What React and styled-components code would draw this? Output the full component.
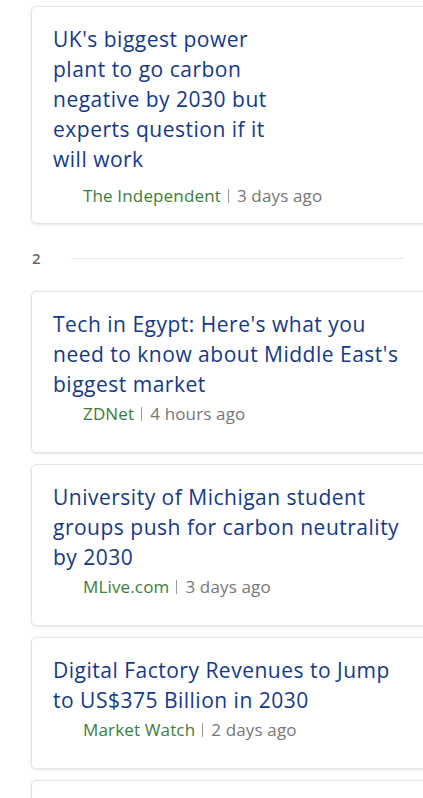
import React from "react";
import styled, { createGlobalStyle } from "styled-components";

const Global = createGlobalStyle`
  html, body {
    margin: 0;
    padding: 0;
    background: #ffffff;
    overflow: hidden;
  }
  body {
    font-family: "Open Sans", Lato, Arial, sans-serif;
  }
`;

const Page = styled.div`
  width: 423px;
  overflow: hidden;
  padding: 6px 0 0 31px;
  box-sizing: border-box;
`;

const Card = styled.article`
  box-sizing: border-box;
  width: 410px;
  background: #fff;
  border: 1px solid #e4e4e4;
  border-radius: 5px;
  box-shadow: 0 1px 3px rgba(0, 0, 0, 0.1);
  padding: 17px 20px ${(p) => (p.$lead ? "15px" : "26px")} 21px;
  margin-bottom: 11px;
`;

const Title = styled.a`
  display: block;
  max-width: ${(p) => (p.$narrow ? "240px" : "352px")};
  font-size: 21px;
  letter-spacing: 0.5px;
  line-height: 30px;
  color: #14398b;
  text-decoration: none;
`;

const Meta = styled.div`
  margin-top: ${(p) => (p.$lead ? "10px" : "3px")};
  padding-left: 30px;
  font-size: 17px;
  letter-spacing: 0.15px;
  line-height: 24px;
  color: #777;
  display: flex;
  align-items: center;
`;

const Source = styled.span`
  color: #3b7d3b;
`;

const Bar = styled.span`
  display: inline-block;
  width: 1px;
  height: 14px;
  background: #9a9a9a;
  margin: 0 8px 0 7px;
`;

const Divider = styled.div`
  display: flex;
  align-items: center;
  height: 20px;
  margin: 24px 0 23px;
  width: 373px;
`;

const Num = styled.span`
  width: 39px;
  font-size: 15px;
  font-weight: 600;
  color: #666;
  padding-left: 1px;
`;

const Rule = styled.span`
  flex: 1;
  height: 1px;
  background: #e6e6e6;
`;

const Story = ({ title, source, time, lead }) => (
  <Card $lead={lead}>
    <Title href="#" $narrow={lead}>{title}</Title>
    <Meta $lead={lead}>
      <Source>{source}</Source>
      <Bar />
      <span>{time}</span>
    </Meta>
  </Card>
);

export default function App() {
  return (
    <>
      <Global />
      <Page>
        <Story
          lead
          title="UK's biggest power plant to go carbon negative by 2030 but experts question if it will work"
          source="The Independent"
          time="3 days ago"
        />
        <Divider>
          <Num>2</Num>
          <Rule />
        </Divider>
        <Story
          title="Tech in Egypt: Here's what you need to know about Middle East's biggest market"
          source="ZDNet"
          time="4 hours ago"
        />
        <Story
          title="University of Michigan student groups push for carbon neutrality by 2030"
          source="MLive.com"
          time="3 days ago"
        />
        <Story
          title="Digital Factory Revenues to Jump to US$375 Billion in 2030"
          source="Market Watch"
          time="2 days ago"
        />
        <Story
          title="Climate goals for 2030 put pressure on global energy markets"
          source="Reuters"
          time="1 day ago"
        />
      </Page>
    </>
  );
}
